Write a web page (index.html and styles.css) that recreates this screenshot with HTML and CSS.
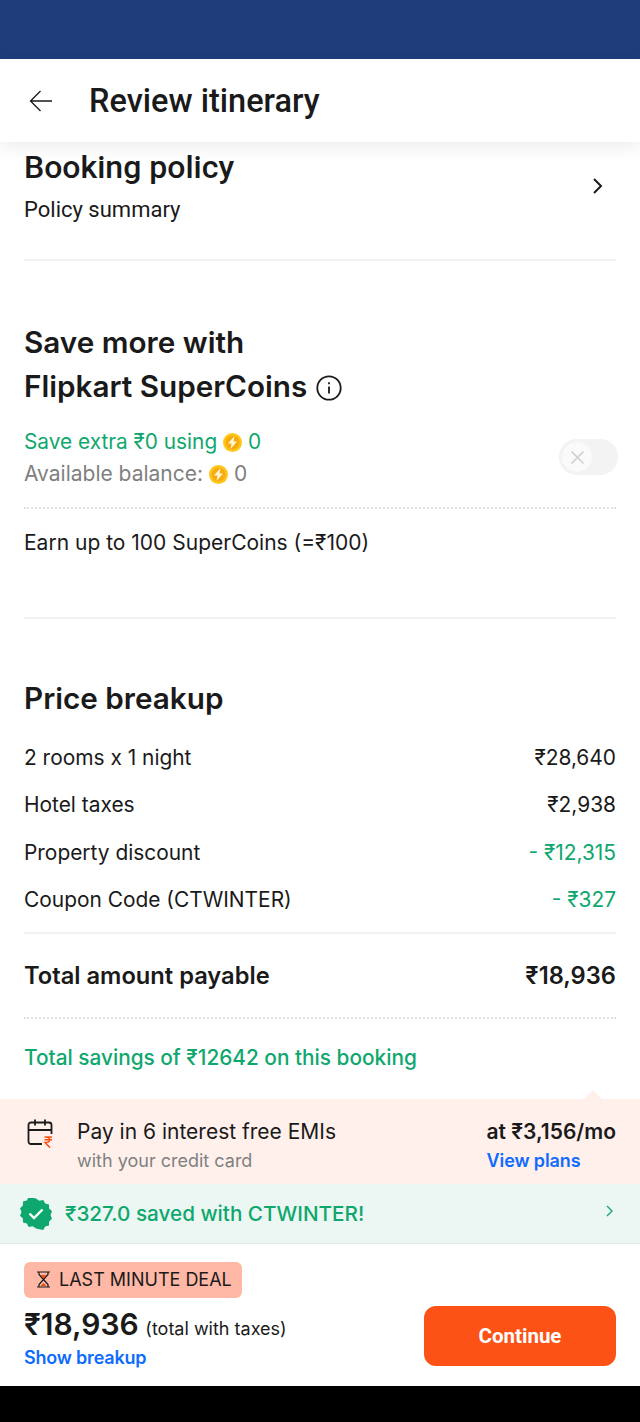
FILE: index.html
```html
<!DOCTYPE html>
<html lang="en">
<head>
<meta charset="utf-8">
<title>Review itinerary</title>
<link rel="stylesheet" href="styles.css">
</head>
<body>
<div class="screen">
  <div class="status"></div>
  <header class="topbar">
    <svg class="back" width="24" height="24" viewBox="0 0 24 24" fill="none" stroke="#1a1a1a" stroke-width="1.300"><path d="M23 12H1.500M11.500 2 1.500 12l10 10"/></svg>
    <h1 class="page-title">Review itinerary</h1>
  </header>
  <main class="content">
    <section class="policy">
      <div>
        <h2 class="h-policy">Booking policy</h2>
        <p class="policy-sub">Policy summary</p>
      </div>
      <svg class="chev" width="12" height="18" viewBox="0 0 12 18" fill="none" stroke="#1a1a1a" stroke-width="2"><path d="M2 2l7 7-7 7"/></svg>
    </section>
    <section class="coins">
      <h2 class="h-section">Save more with<br>Flipkart SuperCoins <svg class="info" width="26" height="26" viewBox="0 0 26 26" fill="none" stroke="#1a1a1a"><circle cx="13" cy="13" r="11.700" stroke-width="1.800"/><path d="M13 11.500v7" stroke-width="1.800"/><path d="M13 7.200v2" stroke-width="1.800"/></svg></h2>
      <div class="coin-row">
        <div>
          <p class="coin-save">Save extra ₹0 using <svg class="coin" width="19" height="19" viewBox="0 0 19 19"><circle cx="9.500" cy="9.500" r="9.500" fill="#ffc61a"/><circle cx="9.500" cy="9.500" r="7" fill="#f7ab0c"/><path d="M11.500 3 5 10.500h3.500L7.500 16 14 8.500h-3.500z" fill="#fff6d8"/></svg><span class="coin-num">0</span></p>
          <p class="coin-bal">Available balance: <svg class="coin" width="19" height="19" viewBox="0 0 19 19"><circle cx="9.500" cy="9.500" r="9.500" fill="#ffc61a"/><circle cx="9.500" cy="9.500" r="7" fill="#f7ab0c"/><path d="M11.500 3 5 10.500h3.500L7.500 16 14 8.500h-3.500z" fill="#fff6d8"/></svg><span class="coin-num">0</span></p>
        </div>
        <div class="toggle">
          <span class="knob"><svg width="15" height="15" viewBox="0 0 15 15" fill="none" stroke="#cfcfcf" stroke-width="1.600"><path d="M1.500 1.500l12 12M13.500 1.500l-12 12"/></svg></span>
        </div>
      </div>
      <p class="earn">Earn up to 100 SuperCoins (=₹100)</p>
    </section>
    <section class="price">
      <h2 class="h-section">Price breakup</h2>
      <div class="rows">
        <div class="row"><span>2 rooms x 1 night</span><span>₹28,640</span></div>
        <div class="row"><span>Hotel taxes</span><span>₹2,938</span></div>
        <div class="row"><span>Property discount</span><span class="green">- ₹12,315</span></div>
        <div class="row"><span>Coupon Code (CTWINTER)</span><span class="green">- ₹327</span></div>
      </div>
      <div class="total"><span>Total amount payable</span><span>₹18,936</span></div>
      <p class="savings">Total savings of ₹12642 on this booking</p>
    </section>
  </main>
  <section class="emi">
    <span class="notch"></span>
    <svg class="cal" width="26" height="30" viewBox="0 0 26 30" fill="none"><path d="M15 26H4a2.500 2.500 0 0 1-2.500-2.500V7A2.500 2.500 0 0 1 4 4.500h18A2.500 2.500 0 0 1 24.500 7v9M1.500 12h23M8 1.500v6M18 1.500v6" stroke="#1a1a1a" stroke-width="1.800"/><path d="M17.500 19h7.500M17.500 21.800h7.500M18.500 19c5.500 0 5.500 5.600 0 5.600h-.5l5 5" stroke="#fb5214" stroke-width="1.500"/></svg>
    <div class="emi-text">
      <p class="emi-main">Pay in 6 interest free EMIs</p>
      <p class="emi-sub">with your credit card</p>
    </div>
    <div class="emi-side">
      <p class="emi-amt">at ₹3,156/mo</p>
      <p class="emi-link">View plans</p>
    </div>
  </section>
  <section class="coupon">
    <svg class="badge" width="32" height="32" viewBox="0 0 32 32"><path d="M16 1l3.300 2.200 3.900-.7 2 3.400 3.800 1.200.1 4 2.900 2.700-1.500 3.700 1.500 3.700-2.900 2.700-.1 4-3.800 1.200-2 3.400-3.900-.7L16 31l-3.300-2.200-3.900.7-2-3.400L3 24.900l-.1-4L0 18.200l1.500-3.700L0 10.800l2.900-2.700.1-4 3.800-1.200 2-3.400 3.900.7z" transform="translate(0 -.5)" fill="#0ea76d"/><path d="M9.500 15.500l4.500 4.500 8.500-8.500" fill="none" stroke="#fff" stroke-width="2.400"/></svg>
    <span class="coupon-text">₹327.0 saved with CTWINTER!</span>
    <svg class="coupon-chev" width="8" height="12" viewBox="0 0 8 12" fill="none" stroke="#0ea76d" stroke-width="1.300"><path d="M1 1l5 5-5 5"/></svg>
  </section>
  <footer class="bottom">
    <div class="bottom-left">
      <div class="deal">
        <svg width="15" height="17" viewBox="0 0 15 17" fill="none"><path d="M1 1h13M1 16h13M3 1v2.500L7.500 8.500 12 3.500V1M3 16v-2.500l4.500-5 4.500 5V16" stroke="#1a1a1a" stroke-width="1.200"/><path d="M4.500 4h6L7.500 7.500zM4.500 15 7.500 12l3 3z" fill="#e8501a"/></svg>
        <span>LAST MINUTE DEAL</span>
      </div>
      <p class="final"><span class="final-amt">₹18,936</span> <span class="final-note">(total with taxes)</span></p>
      <p class="breakup">Show breakup</p>
    </div>
    <button class="continue" type="button">Continue</button>
  </footer>
  <div class="navbar"></div>
</div>
</body>
</html>
```

FILE: styles.css
```css
* { box-sizing: border-box; }
html, body { margin: 0; padding: 0; }
body { width: 640px; height: 1422px; overflow: hidden; background: #fff; font-family: Inter, "Liberation Sans", sans-serif; color: #1a1a1a; }
h1, h2, p { margin: 0; font-weight: inherit; font-size: inherit; }
.screen { width: 640px; height: 1422px; display: flex; flex-direction: column; }
.status { height: 59px; background: #1f3d7a; flex: none; }
.topbar { height: 83px; flex: none; display: flex; align-items: center; padding-left: 29px; background: #fff; box-shadow: 0 6px 16px rgba(0,0,0,.07); position: relative; z-index: 2; }
.back { margin-right: 36px; }
.page-title { font-family: Roboto, Inter, sans-serif; font-size: 32.500px; font-weight: 500; }
.content { flex: 1; min-height: 0; overflow: hidden; padding: 0 24px; }
.policy { height: 119px; display: flex; justify-content: space-between; align-items: flex-start; border-bottom: 2px solid #f2f2f2; padding-top: 8px; }
.h-policy { font-family: Roboto, Inter, sans-serif; font-size: 32px; font-weight: 500; line-height: 34px; }
.policy-sub { font-family: Roboto, Inter, sans-serif; font-size: 22px; line-height: 28px; margin-top: 12px; }
.chev { margin: 27px 12px 0 0; }
.coins { height: 358px; padding-top: 59px; border-bottom: 2px solid #f2f2f2; }
.h-section { font-size: 29.700px; font-weight: 600; line-height: 44px; }
.info { vertical-align: -4px; margin-left: 1px; }
.coin-row { display: flex; justify-content: space-between; align-items: center; margin-top: 18px; padding-bottom: 17px; border-bottom: 2px dotted #e0e0e0; }
.coin-save { font-size: 20.800px; line-height: 32px; color: #0ea76d; }
.coin-bal { font-size: 21px; line-height: 32px; color: #808080; }
.coin { vertical-align: -3px; }
.coin-num { margin-left: 6px; }
.toggle { width: 59px; height: 36px; border-radius: 18px; background: #f3f3f3; padding: 3px; margin: -2px -2px 0 0; }
.knob { width: 30px; height: 30px; border-radius: 50%; background: #fafafa; display: flex; align-items: center; justify-content: center; }
.earn { font-size: 21px; line-height: 32px; margin-top: 18px; }
.price { padding-top: 57px; }
.rows { margin-top: 22px; padding-bottom: 16px; border-bottom: 2px solid #f2f2f2; }
.row { display: flex; justify-content: space-between; font-size: 20.900px; line-height: 32px; margin-bottom: 15.300px; }
.row:last-child { margin-bottom: 0; }
.green { color: #0ea76d; }
.total { display: flex; justify-content: space-between; font-size: 23.700px; font-weight: 600; line-height: 32px; padding: 26px 0 25px; border-bottom: 2px dotted #e0e0e0; }
.savings { font-size: 20.800px; font-weight: 500; line-height: 32px; color: #0ea76d; margin-top: 23px; }
.emi { height: 85px; flex: none; background: #fff0ec; display: flex; padding: 17px 24px 0 27px; position: relative; }
.notch { position: absolute; right: 38px; top: -9px; width: 18px; height: 18px; background: #fff0ec; clip-path: polygon(50% 0, 100% 50%, 0 50%); }
.cal { flex: none; margin: 2px 0 0 0; }
.emi-text { margin-left: 24px; flex: 1; }
.emi-main, .emi-amt { font-size: 21px; line-height: 32px; }
.emi-amt { font-weight: 600; }
.emi-sub { font-size: 18px; line-height: 26px; color: #808080; }
.emi-link { font-size: 18px; font-weight: 600; line-height: 26px; color: #0f6bff; letter-spacing: -.1px; }
.coupon { height: 60px; flex: none; background: #ecf7f3; border-bottom: 1px solid #e4e8e6; display: flex; align-items: center; padding: 0 26px 0 20px; }
.coupon-text { font-size: 20.700px; font-weight: 500; color: #0ea76d; margin-left: 13px; flex: 1; }
.coupon-chev { margin-top: -6px; }
.bottom { height: 142px; flex: none; display: flex; justify-content: space-between; padding: 18px 24px 0; background: #fff; }
.deal { width: 218px; height: 36px; border-radius: 6px; background: #ffb7a6; display: flex; align-items: center; padding: 0 0 2px 12px; gap: 8px; font-size: 18px; }
.final { margin-top: 4px; line-height: 44px; height: 44px; }
.final-amt { font-size: 30px; font-weight: 600; }
.final-note { font-size: 18px; margin-left: 2px; }
.breakup { font-size: 18px; font-weight: 600; line-height: 26px; color: #0f6bff; margin-top: -1px; letter-spacing: -.2px; }
.continue { width: 192px; height: 60px; margin-top: 44px; border: 0; border-radius: 12px; background: #fd5216; color: #fff; font-family: Roboto, Inter, sans-serif; font-size: 20.500px; font-weight: 700; }
.navbar { height: 36px; flex: none; background: #000; }
```
